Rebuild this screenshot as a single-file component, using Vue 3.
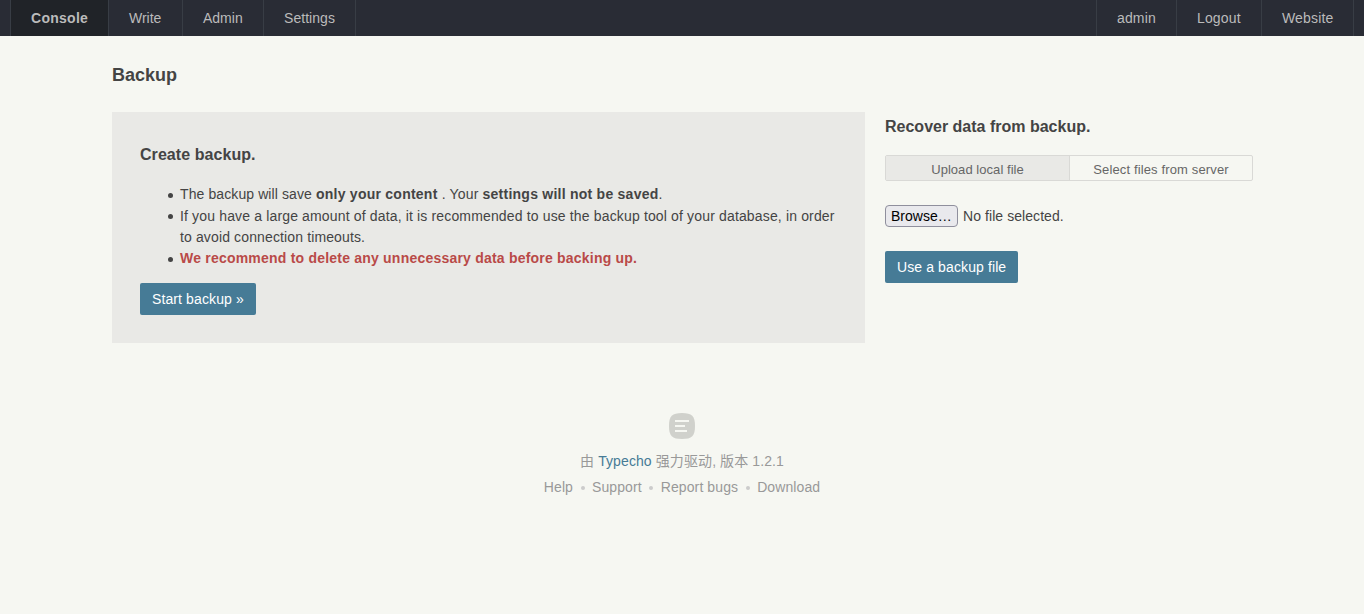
<script setup>
const menu = [
  { label: 'Console', cls: 'm-console' },
  { label: 'Write', cls: 'm-write' },
  { label: 'Admin', cls: 'm-admin' },
  { label: 'Settings', cls: 'm-settings' },
]
const operate = [
  { label: 'admin', cls: 'o-admin' },
  { label: 'Logout', cls: 'o-logout' },
  { label: 'Website', cls: 'o-site' },
]
const resources = ['Help', 'Support', 'Report bugs', 'Download']
</script>

<template>
  <div class="page">
    <header class="nav">
      <nav class="group left">
        <a v-for="m in menu" :key="m.label" :class="m.cls"><span>{{ m.label }}</span></a>
      </nav>
      <nav class="group right">
        <a v-for="o in operate" :key="o.label" :class="o.cls"><span>{{ o.label }}</span></a>
      </nav>
    </header>
    <main class="container">
      <h2>Backup</h2>
      <div class="columns">
        <section class="create">
          <h3 class="create-title">Create backup.</h3>
          <ul>
            <li class="first"><span>The backup will save </span><strong>only your content</strong><span class="your"> . Your </span><strong>settings will not be saved</strong>.</li>
            <li class="second"><span class="long">If you have a large amount of data, it is recommended to use the backup tool of your database, in order</span><br><span class="rest">to avoid connection timeouts.</span></li>
            <li class="warning"><strong>We recommend to delete any unnecessary data before backing up.</strong></li>
          </ul>
          <button class="btn start" type="button">Start backup »</button>
        </section>
        <section class="recover">
          <h3>Recover data from backup.</h3>
          <div class="tabs">
            <a class="active">Upload local file</a>
            <a>Select files from server</a>
          </div>
          <div class="file">
            <button class="browse" type="button">Browse…</button>
            <span class="nofile">No file selected.</span>
          </div>
          <button class="btn use" type="button">Use a backup file</button>
        </section>
      </div>
    </main>
    <footer>
      <svg class="logo" width="26" height="26" viewBox="0 0 26 26">
        <path d="M13 0C3 0 0 3 0 13s3 13 13 13 13-3 13-13S23 0 13 0z" fill="#d0d1cc" />
        <path d="M6 7h14v2H6zM6 12h10v2H6zM6 17h12v2H6z" fill="#f6f7f2" />
      </svg>
      <p class="powered">由 <a>Typecho</a> 强力驱动, 版本 1.2.1</p>
      <p class="links">
        <template v-for="(r, i) in resources" :key="r">
          <i v-if="i" class="dot"></i><a>{{ r }}</a>
        </template>
      </p>
    </footer>
  </div>
</template>

<style>
body { background: #f6f7f2; }
</style>

<style scoped>
* { box-sizing: border-box; }
.page {
  min-height: 614px;
  background: #f6f7f2;
  color: #444;
  font: 14px/21px "Liberation Sans", Arial, "Noto Sans CJK SC", sans-serif;
}
.nav {
  display: flex;
  justify-content: space-between;
  height: 36px;
  padding: 0 10px;
  background: #292c35;
}
.group { display: flex; }
.group a {
  height: 36px;
  padding-left: 20px;
  border-left: 1px solid #383d45;
  color: #bbb;
  line-height: 36px;
  white-space: nowrap;
}
.group a:last-child { border-right: 1px solid #383d45; }
.group .m-console { width: 98px; background: #202328; font-weight: 700; letter-spacing: 0.28px; }
.m-write { width: 74px; }
.m-admin { width: 81px; }
.m-settings { width: 93px; letter-spacing: 0.05px; }
.right a { letter-spacing: 0.15px; }
.o-admin { width: 80px; }
.o-logout { width: 85px; }
.o-site { width: 93px; }
.container { width: 1141px; margin-left: 112px; }
h2 { margin: 0; padding-top: 25px; font-size: 18px; line-height: 28px; height: 76px; }
h3 { margin: 0; font-size: 16px; line-height: 24px; }
.create-title { letter-spacing: 0.06px; }
.columns { display: flex; gap: 20px; }
.create { width: 753px; height: 231px; padding: 31px 28px 0; background: #e9e9e6; }
ul { margin: 17px 0 14px; padding-left: 40px; list-style: none; }
li { position: relative; white-space: nowrap; height: 21px; letter-spacing: 0.1px; }
li::before {
  content: "";
  position: absolute;
  left: -12.5px;
  top: 8.5px;
  width: 5px;
  height: 5px;
  border-radius: 50%;
  background: #444;
}
.first { height: 22px; }
.second { height: 42px; }
.second::before { top: 8px; }
.your { letter-spacing: 0.17px; }
.long { letter-spacing: 0.152px; }
.rest { letter-spacing: 0.13px; }
li strong { letter-spacing: 0.245px; }
.warning strong { color: #b94a48; letter-spacing: 0.213px; }
span, strong { white-space: pre; }
.btn {
  display: block;
  height: 32px;
  padding: 0 12px;
  border: 0;
  border-radius: 2px;
  background: #467b96;
  color: #fff;
  font: inherit;
  letter-spacing: 0.11px;
  line-height: 32px;
  text-align: left;
  white-space: nowrap;
}
.start { width: 116px; }
.use { width: 133px; margin-top: 24px; }
.recover { width: 368px; padding-top: 3px; }
.tabs {
  display: flex;
  height: 26px;
  margin-top: 16px;
  border: 1px solid #d9d9d6;
  border-radius: 2px;
  color: #666;
  font-size: 13px;
  line-height: 27px;
  letter-spacing: 0.14px;
  text-align: center;
}
.tabs a { flex: 1; }
.tabs .active { flex: none; width: 184px; border-right: 1px solid #d9d9d6; background: #e9e9e6; letter-spacing: 0.05px; }
.file { display: flex; align-items: center; margin-top: 24px; height: 22px; gap: 5px; }
.nofile { letter-spacing: 0.07px; }
.browse {
  width: 73px;
  height: 22px;
  padding: 0 5px;
  border: 1px solid #8f8f9d;
  border-radius: 4px;
  background: #e9e9ed;
  color: #000;
  font: inherit;
  line-height: 20px;
  text-align: left;
}
footer { display: flex; flex-direction: column; align-items: center; padding-top: 70px; color: #999; }
.logo { display: block; }
p { margin: 0; white-space: nowrap; }
.powered { margin-top: 12px; letter-spacing: 0.1px; }
.powered a { color: #467b96; }
.links { display: flex; align-items: center; margin-top: 5px; letter-spacing: 0.1px; }
.dot { width: 4px; height: 4px; margin: 1px 7.5px 0; border-radius: 50%; background: #ccc; }
</style>
